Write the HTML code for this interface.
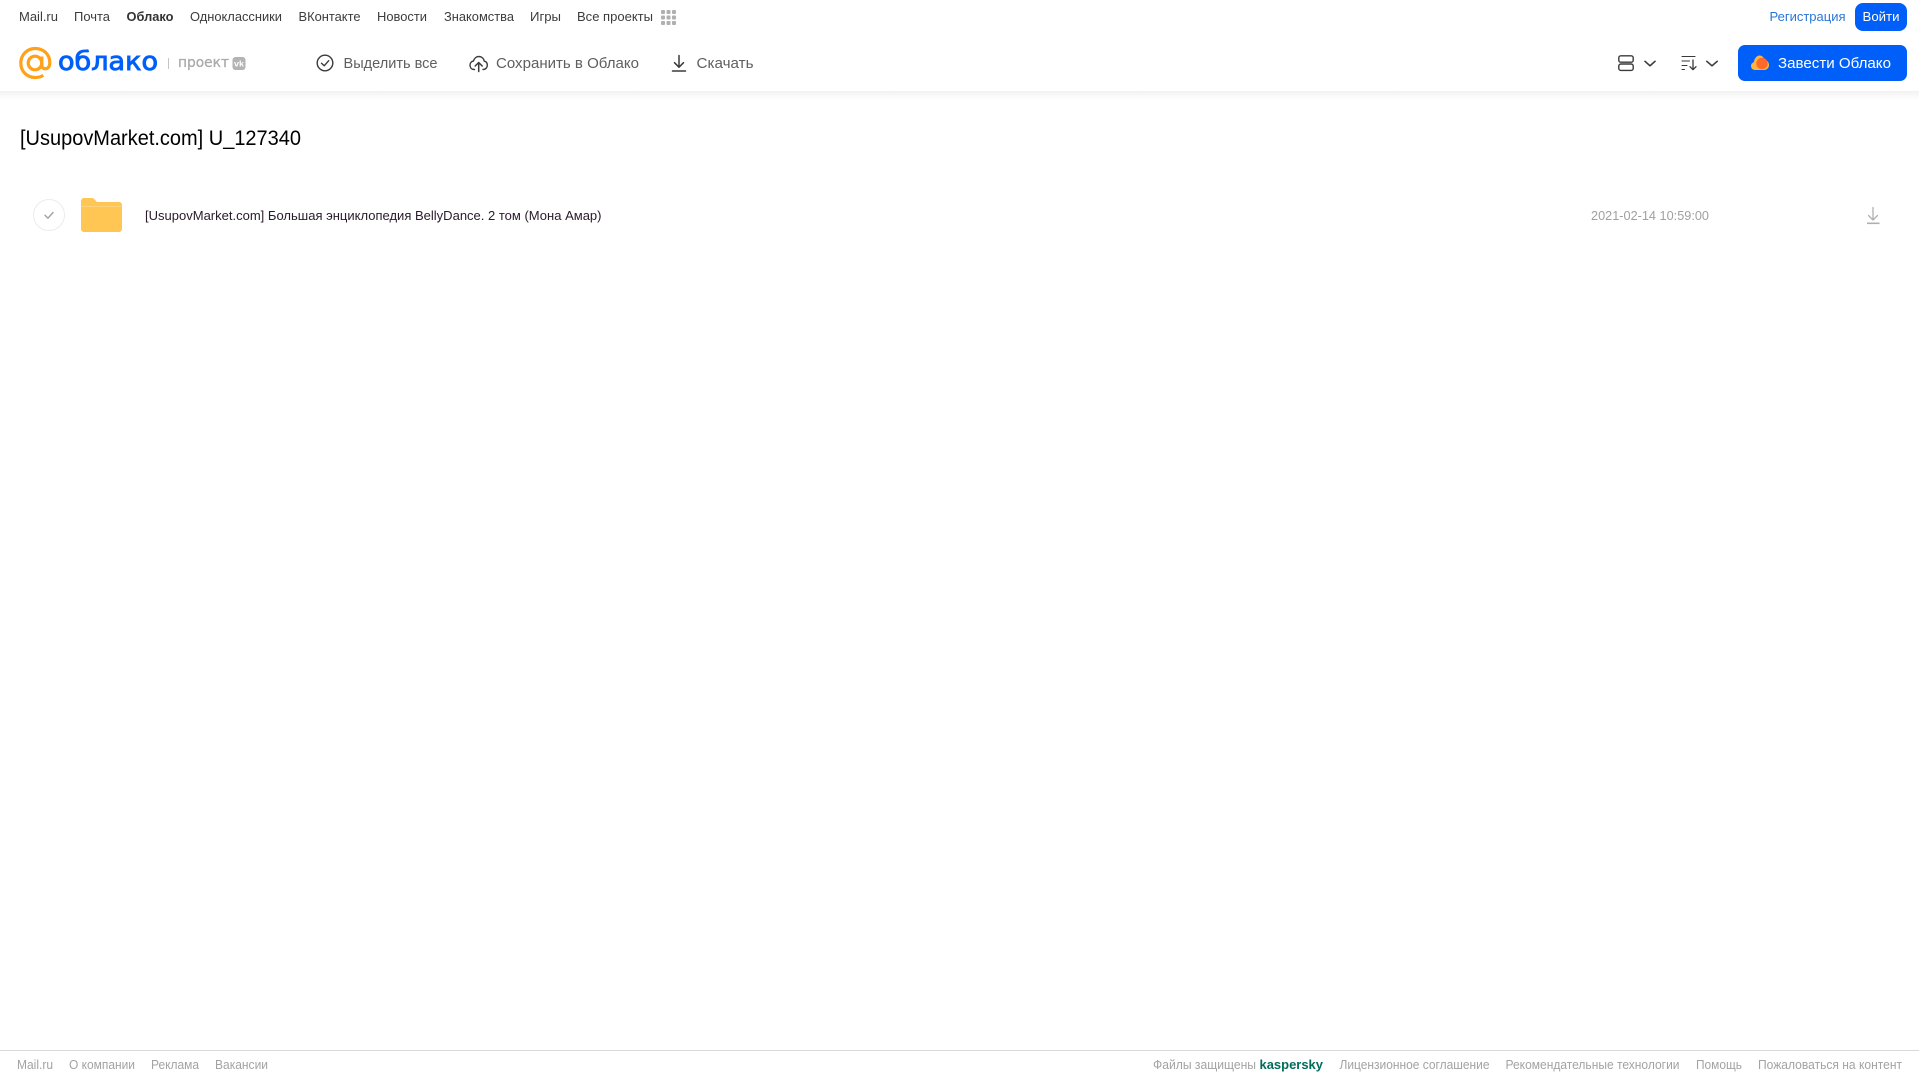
<!DOCTYPE html>
<html lang="ru">
<head>
<meta charset="utf-8">
<title>[UsupovMarket.com] U_127340</title>
<style>
html,body{margin:0;padding:0;background:#fff;width:1919px;height:1079px;overflow:hidden}
svg{display:block;position:absolute;left:0;top:0}
text{font-family:"Liberation Sans",sans-serif}
.n{font-size:13px;fill:#3c3c3c}
.a{font-size:14.5px;fill:#5f5f5f}
.f{font-size:12.5px;fill:#a3a3a3}
</style>
</head>
<body>
<svg width="1919" height="1079" viewBox="0 0 1919 1079" xmlns="http://www.w3.org/2000/svg">
<defs>
<linearGradient id="sh" x1="0" y1="0" x2="0" y2="1"><stop offset="0" stop-color="#f2f2f2"/><stop offset="1" stop-color="#fff"/></linearGradient>
</defs>
<rect width="1919" height="1079" fill="#fff"/>
<rect x="0" y="91" width="1919" height="9" fill="url(#sh)"/>

<!-- top nav -->
<g>
<text class="n" x="19" y="21" textLength="39" lengthAdjust="spacingAndGlyphs">Mail.ru</text>
<text class="n" x="74" y="21" textLength="36" lengthAdjust="spacingAndGlyphs">Почта</text>
<text class="n" x="126.500" y="21" textLength="47" lengthAdjust="spacingAndGlyphs" font-weight="700" style="fill:#333">Облако</text>
<text class="n" x="190" y="21" textLength="92" lengthAdjust="spacingAndGlyphs">Одноклассники</text>
<text class="n" x="298.500" y="21" textLength="62" lengthAdjust="spacingAndGlyphs">ВКонтакте</text>
<text class="n" x="377" y="21" textLength="50" lengthAdjust="spacingAndGlyphs">Новости</text>
<text class="n" x="444" y="21" textLength="70" lengthAdjust="spacingAndGlyphs">Знакомства</text>
<text class="n" x="530" y="21" textLength="31" lengthAdjust="spacingAndGlyphs">Игры</text>
<text class="n" x="577" y="21" textLength="76" lengthAdjust="spacingAndGlyphs">Все проекты</text>
</g>
<g fill="#b0b0b0">
<rect x="661" y="10" width="4" height="4" rx="1"/><rect x="666.500" y="10" width="4" height="4" rx="1"/><rect x="672" y="10" width="4" height="4" rx="1"/>
<rect x="661" y="15.500" width="4" height="4" rx="1"/><rect x="666.500" y="15.500" width="4" height="4" rx="1"/><rect x="672" y="15.500" width="4" height="4" rx="1"/>
<rect x="661" y="21" width="4" height="4" rx="1"/><rect x="666.500" y="21" width="4" height="4" rx="1"/><rect x="672" y="21" width="4" height="4" rx="1"/>
</g>

<text x="1769.500" y="21" font-size="13" fill="#2a76d8" textLength="76" lengthAdjust="spacingAndGlyphs">Регистрация</text>
<rect x="1855" y="3" width="52" height="28" rx="8" fill="#005ff9"/>
<text x="1862.500" y="21" font-size="13" fill="#fff" textLength="37" lengthAdjust="spacingAndGlyphs">Войти</text>

<!-- logo -->
<g fill="none" stroke="#ffa21a" stroke-width="3.200">
<circle cx="35" cy="63" r="6.800"/>
<path d="M41.800 56.500V65.500C41.800 70 49.800 70.500 49.800 62.800C49.800 54 43 48.500 35.300 48.500C27 48.500 20.800 55 20.800 63C20.800 71.500 27 77.500 35.300 77.500C38.300 77.500 41 76.800 43.300 75.300"/>
</g>
<text x="58" y="70" font-size="26" fill="#005ff9" stroke="#005ff9" stroke-width="0.900" style="font-family:'DejaVu Sans',sans-serif" textLength="100" lengthAdjust="spacingAndGlyphs">облако</text>
<rect x="168" y="58" width="1" height="11" fill="#c4c4c4"/>
<text x="178" y="67" font-size="14.500" fill="#aaa" stroke="#aaa" stroke-width="0.300" style="font-family:'DejaVu Sans',sans-serif" textLength="51" lengthAdjust="spacingAndGlyphs">проект</text>
<rect x="232.500" y="57" width="13" height="13" rx="3" fill="#b3b3b3"/>
<text x="234" y="66.500" font-size="8" font-weight="700" fill="#fff" textLength="10" lengthAdjust="spacingAndGlyphs">vk</text>

<!-- actions -->
<g fill="none" stroke="#3a3a3a" stroke-width="1.400" stroke-linecap="round" stroke-linejoin="round">
<circle cx="325" cy="63" r="7.800"/>
<path d="M321.500 63.200L324.200 65.800L328.700 60.700"/>
<path d="M474.500 69.500C471.500 69.500 470 67.500 470 65.200C470 63 471.300 61.300 473.500 61C474.200 58.300 476.300 56.500 478.800 56.500C481.700 56.500 484 58.600 484.300 61.200C486.300 61.600 487.300 63.200 487.300 65.200C487.300 67.600 485.700 69.500 483 69.500"/>
<path d="M478.700 71.500V62.800M475.200 66L478.700 62.500L482.200 66" stroke-width="1.500"/>
<path d="M679 55.500V67M674.500 62.700L679 67.200L683.500 62.700M672.500 71H685.500" stroke-width="1.500"/>
</g>
<text class="a" x="343.500" y="68" textLength="94" lengthAdjust="spacingAndGlyphs">Выделить все</text>
<text class="a" x="496" y="68" textLength="143" lengthAdjust="spacingAndGlyphs">Сохранить в Облако</text>
<text class="a" x="696.500" y="68" textLength="57" lengthAdjust="spacingAndGlyphs">Скачать</text>

<!-- right controls -->
<g fill="none" stroke="#3a3a3a" stroke-width="1.400" stroke-linecap="round" stroke-linejoin="round">
<rect x="1618.800" y="55.800" width="14.400" height="6.400" rx="2"/>
<rect x="1618.800" y="64" width="14.400" height="6.400" rx="2"/>
<path d="M1645 61.300L1650 65.800L1655 61.300" stroke-width="1.600"/>
<path d="M1706.800 61.300L1712 65.800L1717.200 61.300" stroke-width="1.600"/>
<path d="M1682 56.500H1695M1682 61H1689.500M1682 65.500H1687M1682 69.500H1684.500" stroke-width="1.100"/>
<path d="M1693 60V69.500M1690 66.700L1693 69.700L1696 66.700" stroke-width="1.300"/>
</g>
<rect x="1738" y="45" width="169" height="36" rx="7" fill="#005ff9"/>
<path d="M1755 70C1752.500 70 1751 68 1751 66C1751 64 1752.300 62.800 1753.800 62.300C1754.300 58.800 1756.500 55.500 1759.500 55.500C1762.500 55.500 1764 58 1764.800 60C1767.300 60.300 1769 62.500 1769 65C1769 67.800 1767 70 1764 70Z" fill="#ffb43c"/>
<circle cx="1762" cy="63.500" r="5.700" fill="#ff6a2b"/>
<text x="1778" y="68" font-size="14.500" fill="#fff" textLength="113" lengthAdjust="spacingAndGlyphs">Завести Облако</text>

<!-- title -->
<text x="20" y="145" font-size="21.500" fill="#000" textLength="281" lengthAdjust="spacingAndGlyphs">[UsupovMarket.com] U_127340</text>

<!-- row -->
<circle cx="49" cy="215" r="15.500" fill="#fff" stroke="#ececec" stroke-width="1"/>
<path d="M45 215.300L48 218.200L53 212.500" fill="none" stroke="#a0a0a0" stroke-width="1.400" stroke-linecap="round" stroke-linejoin="round"/>
<path d="M84 198H91.500C93.500 198 94.500 199 95.500 200.500C96.300 201.700 97 202 98.500 202H119C120.700 202 122 203.300 122 205V229C122 230.700 120.700 232 119 232H84C82.300 232 81 230.700 81 229V201C81 199.300 82.300 198 84 198Z" fill="#ffc654"/>
<rect x="81" y="206" width="41" height="1" fill="#fdd27a"/>
<text x="145" y="220" font-size="12.500" fill="#2a1a2a" textLength="456.500" lengthAdjust="spacingAndGlyphs">[UsupovMarket.com] Большая энциклопедия BellyDance. 2 том (Мона Амар)</text>
<text x="1591" y="220" font-size="12.500" fill="#a0a0a0" textLength="118" lengthAdjust="spacingAndGlyphs">2021-02-14 10:59:00</text>
<path d="M1873 207.500V220M1868.500 215.500L1873 220L1877.500 215.500" fill="none" stroke="#b0b0b0" stroke-width="1.300" stroke-linecap="round" stroke-linejoin="round"/>
<rect x="1867" y="222.500" width="12.500" height="1.600" fill="#b0b0b0"/>

<!-- footer -->
<rect x="0" y="1050" width="1919" height="1" fill="#d9d9d9"/>
<text class="f" x="17" y="1069" textLength="36" lengthAdjust="spacingAndGlyphs">Mail.ru</text>
<text class="f" x="69" y="1069" textLength="66" lengthAdjust="spacingAndGlyphs">О компании</text>
<text class="f" x="151" y="1069" textLength="48" lengthAdjust="spacingAndGlyphs">Реклама</text>
<text class="f" x="215" y="1069" textLength="53" lengthAdjust="spacingAndGlyphs">Вакансии</text>
<text class="f" x="1153" y="1069" textLength="103" lengthAdjust="spacingAndGlyphs">Файлы защищены</text>
<text x="1259.500" y="1069" font-size="13" font-weight="700" fill="#006d5c" textLength="63.500" lengthAdjust="spacingAndGlyphs">kaspersky</text>
<text class="f" x="1339.500" y="1069" textLength="150" lengthAdjust="spacingAndGlyphs">Лицензионное соглашение</text>
<text class="f" x="1505.500" y="1069" textLength="174" lengthAdjust="spacingAndGlyphs">Рекомендательные технологии</text>
<text class="f" x="1696" y="1069" textLength="46" lengthAdjust="spacingAndGlyphs">Помощь</text>
<text class="f" x="1758" y="1069" textLength="144" lengthAdjust="spacingAndGlyphs">Пожаловаться на контент</text>
</svg>
</body>
</html>
